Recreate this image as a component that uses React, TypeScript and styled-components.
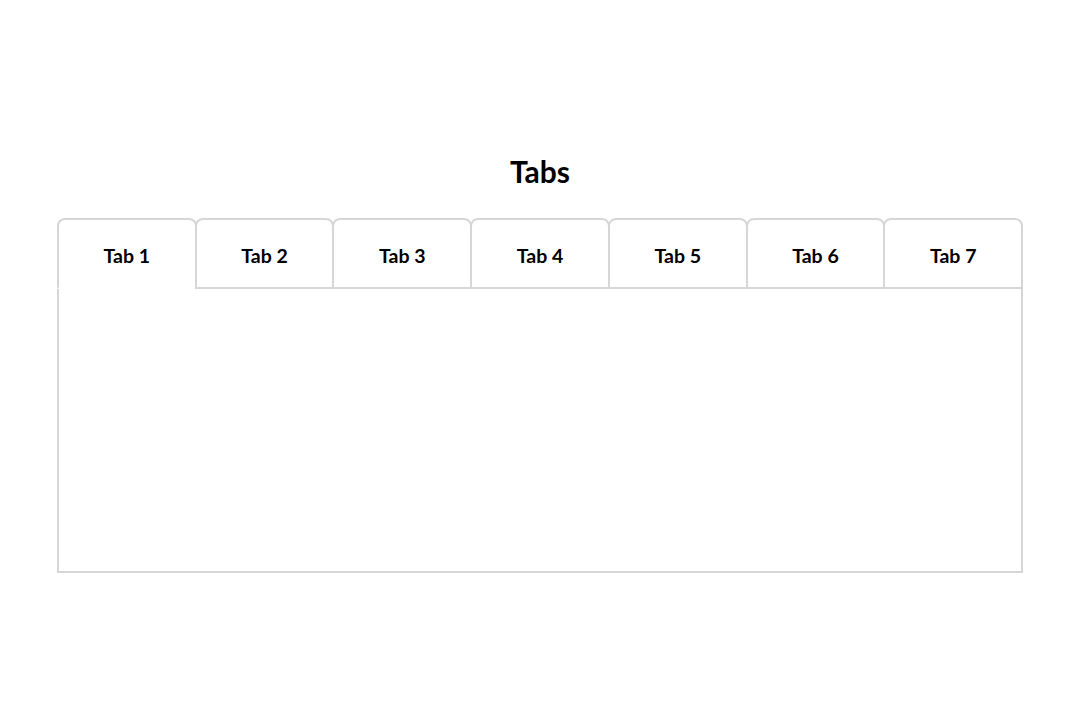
import styled, { createGlobalStyle } from "styled-components";
import { useState } from "react";

const GlobalStyle = createGlobalStyle`
  body {
    margin: 0;
    background: #ffffff;
    font-family: Lato, "Liberation Sans", sans-serif;
    color: #000000;
  }
`;

const Page = styled.main`
  display: flex;
  flex-direction: column;
  align-items: center;
  padding-top: 154px;
`;

const Title = styled.h1`
  margin: 0 0 30px;
  font-size: 30px;
  line-height: 34px;
  font-weight: 700;
`;

const TabsBox = styled.section`
  width: 966px;
  display: flex;
  flex-direction: column;
`;

const TabList = styled.div`
  display: flex;
`;

const Tab = styled.button<{ $active: boolean }>`
  flex: 1;
  box-sizing: border-box;
  height: 71px;
  margin-left: -2px;
  padding: 4px 0 0;
  background: transparent;
  border: 2px solid #d6d6d6;
  border-bottom-color: ${(p) => (p.$active ? "transparent" : "#d6d6d6")};
  border-radius: 8px 8px 0 0;
  font-family: inherit;
  font-size: 19.5px;
  font-weight: 700;
  color: #000000;
  cursor: pointer;

  &:first-child {
    margin-left: 0;
  }
`;

const Panel = styled.div`
  box-sizing: border-box;
  height: 284px;
  border: 2px solid #d6d6d6;
  border-top: none;
`;

const tabs = ["Tab 1", "Tab 2", "Tab 3", "Tab 4", "Tab 5", "Tab 6", "Tab 7"];

const App = () => {
  const [active, setActive] = useState(0);

  return (
    <>
      <GlobalStyle />
      <Page>
        <Title>Tabs</Title>
        <TabsBox>
          <TabList>
            {tabs.map((t, i) => (
              <Tab key={t} $active={i === active} onClick={() => setActive(i)}>
                {t}
              </Tab>
            ))}
          </TabList>
          <Panel />
        </TabsBox>
      </Page>
    </>
  );
};

export default App;
